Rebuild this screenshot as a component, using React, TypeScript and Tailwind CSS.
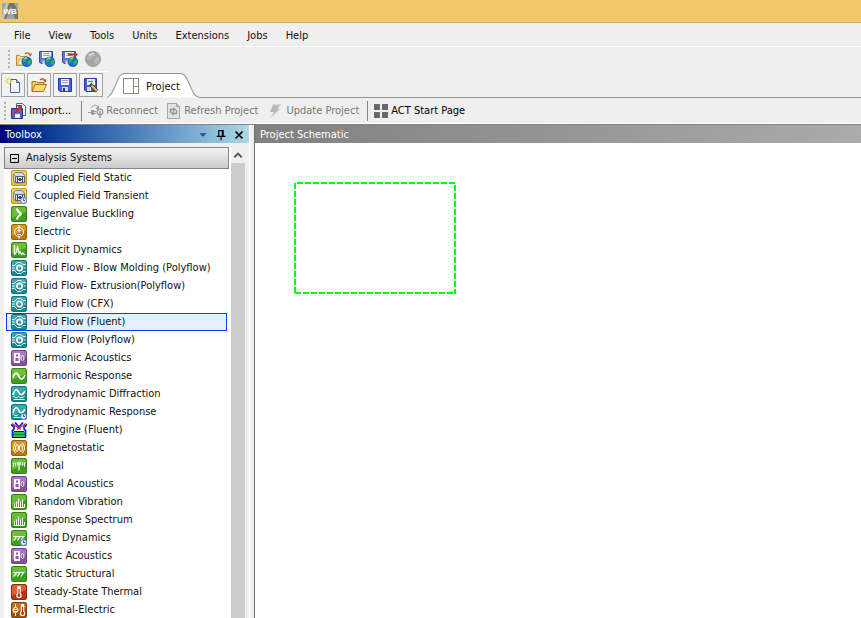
import React from "react";

type Kind =
  | "coupled" | "coupledTime" | "buckling" | "electric" | "explicit" | "fluid"
  | "acoustics" | "harmonic" | "hydro" | "hydroTime" | "engine" | "magnet"
  | "modal" | "spectrum" | "rigidTime" | "structural" | "thermal" | "thermalElectric";

const systems: { name: string; kind: Kind }[] = [
  { name: "Coupled Field Static", kind: "coupled" },
  { name: "Coupled Field Transient", kind: "coupledTime" },
  { name: "Eigenvalue Buckling", kind: "buckling" },
  { name: "Electric", kind: "electric" },
  { name: "Explicit Dynamics", kind: "explicit" },
  { name: "Fluid Flow - Blow Molding (Polyflow)", kind: "fluid" },
  { name: "Fluid Flow- Extrusion(Polyflow)", kind: "fluid" },
  { name: "Fluid Flow (CFX)", kind: "fluid" },
  { name: "Fluid Flow (Fluent)", kind: "fluid" },
  { name: "Fluid Flow (Polyflow)", kind: "fluid" },
  { name: "Harmonic Acoustics", kind: "acoustics" },
  { name: "Harmonic Response", kind: "harmonic" },
  { name: "Hydrodynamic Diffraction", kind: "hydro" },
  { name: "Hydrodynamic Response", kind: "hydroTime" },
  { name: "IC Engine (Fluent)", kind: "engine" },
  { name: "Magnetostatic", kind: "magnet" },
  { name: "Modal", kind: "modal" },
  { name: "Modal Acoustics", kind: "acoustics" },
  { name: "Random Vibration", kind: "spectrum" },
  { name: "Response Spectrum", kind: "spectrum" },
  { name: "Rigid Dynamics", kind: "rigidTime" },
  { name: "Static Acoustics", kind: "acoustics" },
  { name: "Static Structural", kind: "structural" },
  { name: "Steady-State Thermal", kind: "thermal" },
  { name: "Thermal-Electric", kind: "thermalElectric" },
];

const palette: Record<string, [string, string, string]> = {
  yellow: ["#f6df74", "#e8bd28", "#b98c10"],
  green: ["#7cc93c", "#3c9f1c", "#2c7d14"],
  amber: ["#dba63a", "#b9790c", "#8f5c08"],
  teal: ["#46b4ba", "#148a93", "#0d6d78"],
  purple: ["#b68ac9", "#85509f", "#6d3e88"],
  red: ["#dd6f48", "#b8330f", "#8c2408"],
  brown: ["#cf7a2c", "#a34d08", "#7c3a06"],
};

const tone: Record<Kind, string> = {
  coupled: "yellow", coupledTime: "yellow", buckling: "green", electric: "amber",
  explicit: "green", fluid: "teal", acoustics: "purple", harmonic: "green",
  hydro: "teal", hydroTime: "teal", engine: "", magnet: "amber", modal: "green",
  spectrum: "green", rigidTime: "green", structural: "green", thermal: "red",
  thermalElectric: "brown",
};

const Clock = () => (
  <g>
    <circle cx="12.500" cy="12.500" r="3" fill="#dfe9ff" stroke="#5b7fdc" />
    <path d="M12.500 10.500v2h1.500" fill="none" stroke="#3558b8" />
  </g>
);

const Cube = () => (
  <g>
    <path d="M2.500 4.500 4.500 2.500h7l2 3v7l-9 .5-2-2z" fill="#d3dae8" stroke="#7b808a" />
    <path d="m2.500 4.500 2 1.500" stroke="#7b808a" />
    <path d="M4.500 6.500h9v6h-9z" fill="#f4f4f8" stroke="#5c6070" />
    <path d="M6.500 7v5M11.500 7v5M6.500 9.500h5" stroke="#3c3f70" strokeWidth="1.200" fill="none" />
    <path d="M8.500 8v3M9.500 8v3" stroke="#3c3f70" fill="none" />
  </g>
);

const Therm = ({ x }: { x: number }) => (
  <g>
    <path d={`M${x} 3.500v7`} stroke="#fff" strokeWidth="3.500" strokeLinecap="round" />
    <circle cx={x} cy="11.500" r="2.700" fill="#fff" stroke="none" />
    <path d={`M${x} 5v6`} stroke="#b02a0a" strokeWidth="1.200" />
    <circle cx={x} cy="11.500" r="1.400" fill="#b02a0a" stroke="none" />
  </g>
);

function Glyph({ kind }: { kind: Kind }) {
  switch (kind) {
    case "coupled": return <Cube />;
    case "coupledTime": return <><Cube /><Clock /></>;
    case "buckling": return <path d="M5.500 2.500 7 5l3 3-3 3-1.500 2.500" strokeWidth="2" strokeLinejoin="round" />;
    case "electric":
      return <><circle cx="8" cy="8" r="4.500" /><path d="M8 1v2.500M8 12.500V15M6 6.500h4M8 4.500v4M6 10.500h4" /></>;
    case "explicit": return <path d="M3.500 3v10M3.500 12.500 5.500 10l1-6 1.500 7.500 1-2 1.500 3 1-1.500 1.500 1.500h1" strokeWidth="1.200" />;
    case "fluid":
      return <>
        <path d="M14.500 4.500H12L10 2.500H6.500L3.500 5.500H1M14.500 11.500H12l-2 2H6.500l-3-3H1M1 8h2.500" />
        <circle cx="8.500" cy="8" r="2.700" strokeWidth="1.700" />
        <path d="M12.500 8H15" stroke="#bfe6e8" />
      </>;
    case "acoustics":
      return <><path d="M3 3h6v10H3z" fill="#fff" stroke="none" /><path d="M5 4.500h2v2H5zM4.500 8h3v3h-3z" fill="#8b56a5" stroke="none" />
        <ellipse cx="11.500" cy="8" rx="1.500" ry="2.500" /></>;
    case "harmonic": return <path d="M2 9.500C3 5 5.500 4 7 6.500l1.500 3C10 12 12.500 11 14 7" strokeWidth="1.700" />;
    case "hydro": return <><path d="M2 9C3.500 3 6 2.500 7.500 6S11 10 14 5.500" strokeWidth="1.500" /><path d="M2.500 10.500 5 12l2.500-1.500L10 12l3.500-1.500M2.500 13.500h11" /></>;
    case "hydroTime": return <><path d="M2 9C3.500 3 6 2.500 7.500 6S11 10 14 5.500" strokeWidth="1.500" /><path d="M2.500 10.500 5 12l2.500-1.500M2.500 13.500h7" /><Clock /></>;
    case "engine":
      return <>
        <path d="M2 7h12v3H2z" fill="#fff" stroke="none" /><path d="M2 10h12v5H2z" fill="#1cc944" stroke="none" />
        <path d="M2.500 12.500h11" stroke="#0b8630" /><path d="M1 15.500h14" stroke="#111" />
        <path d="M0 2.500 3 5v2L1.500 8.500V15M16 2.500 13 5v2l1.500 1.500V15M4 .500 8 5l4-4.500" stroke="#1023e8" strokeWidth="1.800" />
        <path d="m1 1.500 9 6M15 1.500l-9 6" stroke="#ed1c24" strokeWidth="1.400" /><path d="M3 9.500h10" stroke="#222" />
      </>;
    case "magnet":
      return <><ellipse cx="6" cy="8" rx="1.500" ry="3.500" /><ellipse cx="10" cy="8" rx="1.500" ry="3.500" /><path d="M4.500 3Q.5 8 4.500 13M11.500 3q4 5 0 10" /></>;
    case "modal": return <path d="M2.500 4.500v4M4.500 4.500v3M6.500 4.500v2M8 3.500v9M9.500 4.500v2M11.500 4.500v3M13.500 4.500v4" strokeWidth="1.200" />;
    case "spectrum": return <path d="M3.500 13V9.500M5.500 13V7.500M7.500 13V4.500M9.500 13V7.500M11.500 13V5.500M13.500 13v-3M2.500 13.500h11" />;
    case "rigidTime": return <><path d="M2.500 6.500h11M3 10.500l2.500-4M6.500 10.500l2.500-4M10 10.500l2.500-4" strokeWidth="1.200" /><Clock /></>;
    case "structural": return <path d="M2.500 6.500h11M3 10.500l2.500-4M6.500 10.500l2.500-4M10 10.500l2.500-4" strokeWidth="1.200" />;
    case "thermal": return <Therm x={8} />;
    case "thermalElectric":
      return <><Therm x={11.500} /><path d="M4.500 2v3M4.500 11v3" /><circle cx="4.500" cy="8" r="2.500" /><path d="M3 7.500h3M3 9.500h3" /></>;
  }
}

function SystemIcon({ kind }: { kind: Kind }) {
  const c = palette[tone[kind]];
  return (
    <svg className="size-4 shrink-0" viewBox="0 0 16 16" fill="none" stroke="#fff" aria-hidden="true">
      {c && (
        <g stroke="none">
          <rect width="16" height="16" rx="2.500" fill={c[2]} />
          <rect x=".8" y=".8" width="14.400" height="14.400" rx="2" fill={c[1]} />
          <path d="M1 3q0-2 2-2h10q2 0 2 2v3Q9 8 1 12z" fill={c[0]} opacity=".75" />
        </g>
      )}
      <Glyph kind={kind} />
    </svg>
  );
}

function Art({ children, className = "size-4" }: { children: React.ReactNode; className?: string }) {
  return <svg className={`${className} shrink-0`} viewBox="0 0 16 16" fill="none" aria-hidden="true">{children}</svg>;
}

const Globe = () => (
  <g>
    <circle cx="10.800" cy="10.800" r="4.900" fill="#1672d8" stroke="#0d3d8c" strokeWidth=".6" />
    <path d="M7 8q2-2.500 4-1.800l1 1.600-2 1-1 2.500-2-.8zM12 10l3-1.500q1 3-1.500 5.500l-2-1.500z" fill="#2cb844" />
    <path d="M8.500 7.500q1.500-1 2.500-.5" stroke="#c9f2ff" />
  </g>
);

const WebFolder = () => (
  <g>
    <path d="M.5 14.500V4.500h3l1 1h6v9z" fill="#f3dc96" stroke="#b08c3c" />
    <path d="m1 14 3-6h7v6z" fill="#fbeebc" stroke="#c9a95c" />
    <path d="M9 3q3-2.500 5 .8" stroke="#d04a38" strokeWidth="1.300" />
    <path d="m15.800 2-.8 3.500-2.500-1.800z" fill="#d04a38" />
  </g>
);

const Disk = () => (
  <g>
    <path d="M.5.500h13v12H2l-1.500-1.500z" fill="#6a78d4" stroke="#3c479c" />
    <path d="M3 1h9v6H3z" fill="#f5f6fb" />
    <path d="M4.500 2.500h6M4.500 4.500h6" stroke="#8f97a8" />
    <path d="M3.500 9.500h5V13h-5z" fill="#dde1ee" />
  </g>
);

const Floppy = () => (
  <g>
    <path d="M1.500 1.500h13v13H3L1.500 13z" fill="#4a5fd0" stroke="#2b3a9c" />
    <path d="M4 2h8v6H4z" fill="#f2f4fb" />
    <path d="M5 3.500h6M5 5.500h6" stroke="#9aa2b8" />
    <path d="M5 10h6v4H5z" fill="#d5daea" />
    <path d="M6 11h2v3H6z" fill="#28367e" />
  </g>
);

const OpenFolder = () => (
  <g>
    <path d="M1 14V4.500h4l1 1h7V8" fill="#f5cf67" stroke="#a67613" />
    <path d="m1 14.500 3-7h11.500l-3 7z" fill="#ffd977" stroke="#a67613" />
    <path d="M9 3q3-2.500 5 .8" stroke="#d83a1c" strokeWidth="1.300" />
    <path d="m15.500 2-.8 3.500-2.500-1.800z" fill="#d83a1c" />
  </g>
);

function Grip() {
  return (
    <span className="grid gap-[2px]" aria-hidden="true">
      {[0, 1, 2, 3, 4].map((n) => <i key={n} className="size-[2px] bg-[#b4b4b4]" />)}
    </span>
  );
}

const webTools = [
  { label: "Open from web", art: <><WebFolder /><Globe /></> },
  { label: "Save to web", art: <><Disk /><Globe /></> },
  { label: "Send to web", art: <><Disk /><path d="M6 3.500h7" stroke="#c43040" strokeWidth="2" /><path d="m12 0 4 3.500L12 7z" fill="#c43040" /><Globe /></> },
  {
    label: "Web status",
    art: <><circle cx="8" cy="8" r="7.500" fill="#a6a6a6" stroke="#9a9a9a" /><path d="M3 4q3-3 6-2l1 3-3 1-2 3-3-1zM9 8l5-2q1 4-2 7l-3-2z" fill="#b8b8b8" /><path d="M4 4.500q2-2.500 5-2" stroke="#d6d6d6" strokeWidth="1.500" /></>,
  },
];

const fileTools = [
  {
    label: "New",
    art: <><path d="M5.500 2.500h6l3 3v10h-9z" fill="#eef5ff" stroke="#4c6486" /><path d="M11.500 2.500v3h3" fill="#b6cdec" stroke="#4c6486" /><path d="M4 0v8M0 4h8M1.200 1.200l5.600 5.600M6.800 1.200 1.200 6.800" stroke="#e8c63c" /><circle cx="4" cy="4" r="1.500" fill="#fff6b0" /></>,
  },
  { label: "Open", art: <OpenFolder /> },
  { label: "Save", art: <Floppy /> },
  {
    label: "Save as",
    art: <><path d="M1.500 1.500h12v13H3L1.500 13z" fill="#4a5fd0" stroke="#2b3a9c" /><path d="M4 2h8v6H4z" fill="#f2f4fb" /><path d="M5 4.500h5" stroke="#38a85c" strokeWidth="1.500" /><path d="M4 10h4v4H4z" fill="#d5daea" /><path d="m7 7 7 7" stroke="#3b3b3b" strokeWidth="3.600" /><path d="m8.500 8.500 5.500 5.500" stroke="#f1bd45" strokeWidth="2" /><path d="m5.500 5.500 2.500.6-1.900 1.900z" fill="#fff" /></>,
  },
];

export default function App() {
  return (
    <div className="flex h-screen flex-col overflow-hidden bg-[#efefef] font-['DejaVu_Sans_Condensed','DejaVu_Sans',sans-serif] text-[11px] leading-4 text-[#111] [font-stretch:condensed]">
      <header className="flex h-[23px] shrink-0 items-center border-b border-[#c9a85c] bg-[#f0c869] px-0.5">
        <svg className="size-4" viewBox="0 0 16 16" role="img" aria-label="Workbench">
          <path d="M0 0h16v16H0z" fill="#a3a3a3" />
          <path d="m5 0-5 12v4h4L9 3l4 13h3V9l-4-9z" fill="#747474" />
          <path d="m0 12 4-12h3L2 16H0z" fill="#c2c2c2" />
          <text x="8" y="11" textAnchor="middle" fontFamily="Liberation Sans, sans-serif" fontWeight="700" fontSize="8" fill="#fff">WB</text>
        </svg>
      </header>

      <nav className="flex h-6 shrink-0 items-center gap-[18px] border-b border-white px-3.5 pt-0.5">
        {["File", "View", "Tools", "Units", "Extensions", "Jobs", "Help"].map((m) => (
          <button key={m} type="button">{m}</button>
        ))}
      </nav>

      <div className="flex shrink-0 pl-1">
        <div className="flex h-[25px] w-[104px] items-center border-b border-white pl-1">
          <Grip />
          <div className="ml-1.5 flex gap-[7px]">
            {webTools.map((t) => (
              <button key={t.label} type="button" aria-label={t.label}><Art>{t.art}</Art></button>
            ))}
          </div>
        </div>
      </div>

      <div className="flex h-[26px] shrink-0 items-end">
        <div className="flex gap-0.5 pb-px pl-px">
          {fileTools.map((t) => (
            <button key={t.label} type="button" aria-label={t.label} className="grid size-6 place-items-center border border-[#a2a2a2] bg-[#f3f3f3]">
              <Art>{t.art}</Art>
            </button>
          ))}
        </div>
        <button type="button" className="relative ml-1 flex h-[25px] items-center gap-[7px] pr-5 pl-4">
          <svg className="absolute inset-0 size-full" viewBox="0 0 92 25" preserveAspectRatio="none" aria-hidden="true">
            <path d="M0 24.500C4 23 6 18 9 11 12 3 13 .5 18 .5h54c5 0 6 3 9 9 4 9 5 14 11 15z" fill="#fff" />
            <path d="M0 24.500C4 23 6 18 9 11 12 3 13 .5 18 .5h54c5 0 6 3 9 9 4 9 5 14 11 15" fill="none" stroke="#949494" />
          </svg>
          <svg className="relative size-4" viewBox="0 0 16 16" fill="none" stroke="#8b8878" aria-hidden="true">
            <path d="M.5.5h15v15H.500zM10.500.500v15M10.500 8.500h5" />
          </svg>
          <span className="relative pt-0.5">Project</span>
        </button>
        <div className="h-px flex-1 bg-[#949494]" />
      </div>

      <div className="flex h-[26px] shrink-0 items-center border-b border-white pl-1 text-[#777]">
        <Grip />
        <button type="button" className="ml-[5px] flex items-center gap-0.5 text-black">
          <Art>
            <path d="M5.500.500h6l3 3v9h-9z" fill="#edf3ff" stroke="#4a6088" />
            <path d="M.5 5.500h11v10H.500z" fill="#5566c4" stroke="#26337e" /><path d="M4 11h5v4H4z" fill="#e8ecf8" />
            <path d="m3 10.500 6-6" stroke="#d42828" strokeWidth="2" /><path d="M5 2h6v6z" fill="#d42828" />
          </Art>
          Import...
        </button>
        <span className="ml-2.5 h-5 w-px bg-[#858585]" />
        <button type="button" disabled className="ml-1.5 flex items-center gap-0.5">
          <Art>
            <path d="M0 9.500h3M6 8.500h2M6 10.500h2" stroke="#999" /><path d="M3 7h3v5H4.500L3 11z" fill="#999" />
            <path d="M3.500 5q3-5 6-1.500" stroke="#999" /><path d="M11 2v4H7.500z" fill="#999" />
            <circle cx="12" cy="9" r="2.800" stroke="#999" strokeWidth="1.300" /><path d="M12 8v7" stroke="#999" strokeWidth="1.500" />
          </Art>
          Reconnect
        </button>
        <button type="button" disabled className="ml-2 flex items-center gap-0.5">
          <Art>
            <path d="M1.500.500h9l3 3v12h-12z" fill="#e3e3e3" stroke="#a5a5a5" /><path d="M10.500.500v3h3" stroke="#a5a5a5" />
            <path d="M4.500 10V6.500H8M10.500 7v3.500H7" stroke="#919191" strokeWidth="1.300" />
            <path d="M7.500 4v5L10 6.500zM7.500 8v5L5 10.500z" fill="#919191" />
          </Art>
          Refresh Project
        </button>
        <button type="button" disabled className="ml-2.5 flex items-center gap-0.5">
          <Art><path d="M5 1.500h8L9.500 6H12L2.500 15 6 9H2z" fill="#b9b9b9" /><path d="M5.500 2h7L9 6.500" stroke="#d4d4d4" /></Art>
          Update Project
        </button>
        <span className="ml-2 h-5 w-px bg-[#858585]" />
        <button type="button" className="ml-1.5 flex items-center gap-[1px] text-black">
          <Art><path d="M0 1h6v6H0zM8 1h6v6H8zM0 9h6v6H0zM8 9h6v6H8z" fill="#696969" /></Art>
          ACT Start Page
        </button>
      </div>

      <main className="flex min-h-0 flex-1 border-t border-[#828282]">
        <aside className="flex w-[250px] shrink-0 flex-col border-r border-white">
          <h2 className="flex h-[18px] shrink-0 items-center bg-linear-to-r from-[#00007f] to-[#add8e6] pt-px pr-[3px] pl-[5px] text-white">
            <span className="flex-1">Toolbox</span>
            <span className="flex items-center gap-1">
              <button type="button" aria-label="Toolbox menu"><Art className="size-3.5"><path d="M4 6h8l-4 4z" fill="#234b92" /></Art></button>
              <button type="button" aria-label="Pin"><Art className="size-3.5"><path d="M5.500 9V3h5v6M3 9.500h10M8 10v4M9.500 3v6" stroke="#000" strokeWidth="1.300" /></Art></button>
              <button type="button" aria-label="Close"><Art className="size-3.5"><path d="m4 4 8 8M12 4l-8 8" stroke="#000" strokeWidth="2" /></Art></button>
            </span>
          </h2>
          <div className="mt-1 mr-1 ml-1 flex min-h-0 flex-1 bg-white">
            <div className="flex min-w-0 flex-1 flex-col">
              <button type="button" aria-expanded="true" className="flex h-[22px] shrink-0 items-center gap-[7px] border border-[#858585] bg-linear-to-b from-[#f4f4f4] to-[#cbcbcb] pl-[5px]">
                <svg className="size-[9px]" viewBox="0 0 9 9" fill="none" stroke="#000" aria-hidden="true"><path d="M.500.500h8v8h-8zM2 4.500h5" /></svg>
                Analysis Systems
              </button>
              <ul className="pr-0.5 pl-0.5">
                {systems.map((s) => (
                  <li key={s.name}>
                    <button
                      type="button"
                      className={
                        s.name === "Fluid Flow (Fluent)"
                          ? "flex h-[18px] w-full items-center gap-[7px] border border-[#0a3cff] bg-[#e5effa] pl-1"
                          : "flex h-[18px] w-full items-center gap-[7px] border border-transparent pl-1"
                      }
                    >
                      <SystemIcon kind={s.kind} />
                      {s.name}
                    </button>
                  </li>
                ))}
              </ul>
            </div>
            <div className="ml-0.5 flex w-3.5 flex-col bg-[#cdcdcd]">
              <button type="button" aria-label="Scroll up" className="grid h-4 place-items-center bg-[#efefef]">
                <Art className="size-3"><path d="m3 11 5-5 5 5" stroke="#555" strokeWidth="2.500" /></Art>
              </button>
            </div>
          </div>
        </aside>

        <section className="ml-1 flex min-w-0 flex-1 flex-col border-l border-[#6e6e6e] bg-white">
          <h2 className="flex h-[18px] shrink-0 items-center bg-linear-to-r from-[#808080] to-[#ababab] pt-px pl-[5px] text-white">Project Schematic</h2>
          <div className="relative flex-1">
            <div className="absolute top-[39px] left-[39px] h-[112px] w-[162px]">
              <svg className="size-full" viewBox="0 0 162 112" fill="none" stroke="#00ff00" strokeWidth="2" strokeDasharray="6 2" aria-label="Drop target" role="img">
                <path d="M3 1h158M161 3v109M1 1v110M1 111h160" />
              </svg>
            </div>
          </div>
        </section>
      </main>
    </div>
  );
}
